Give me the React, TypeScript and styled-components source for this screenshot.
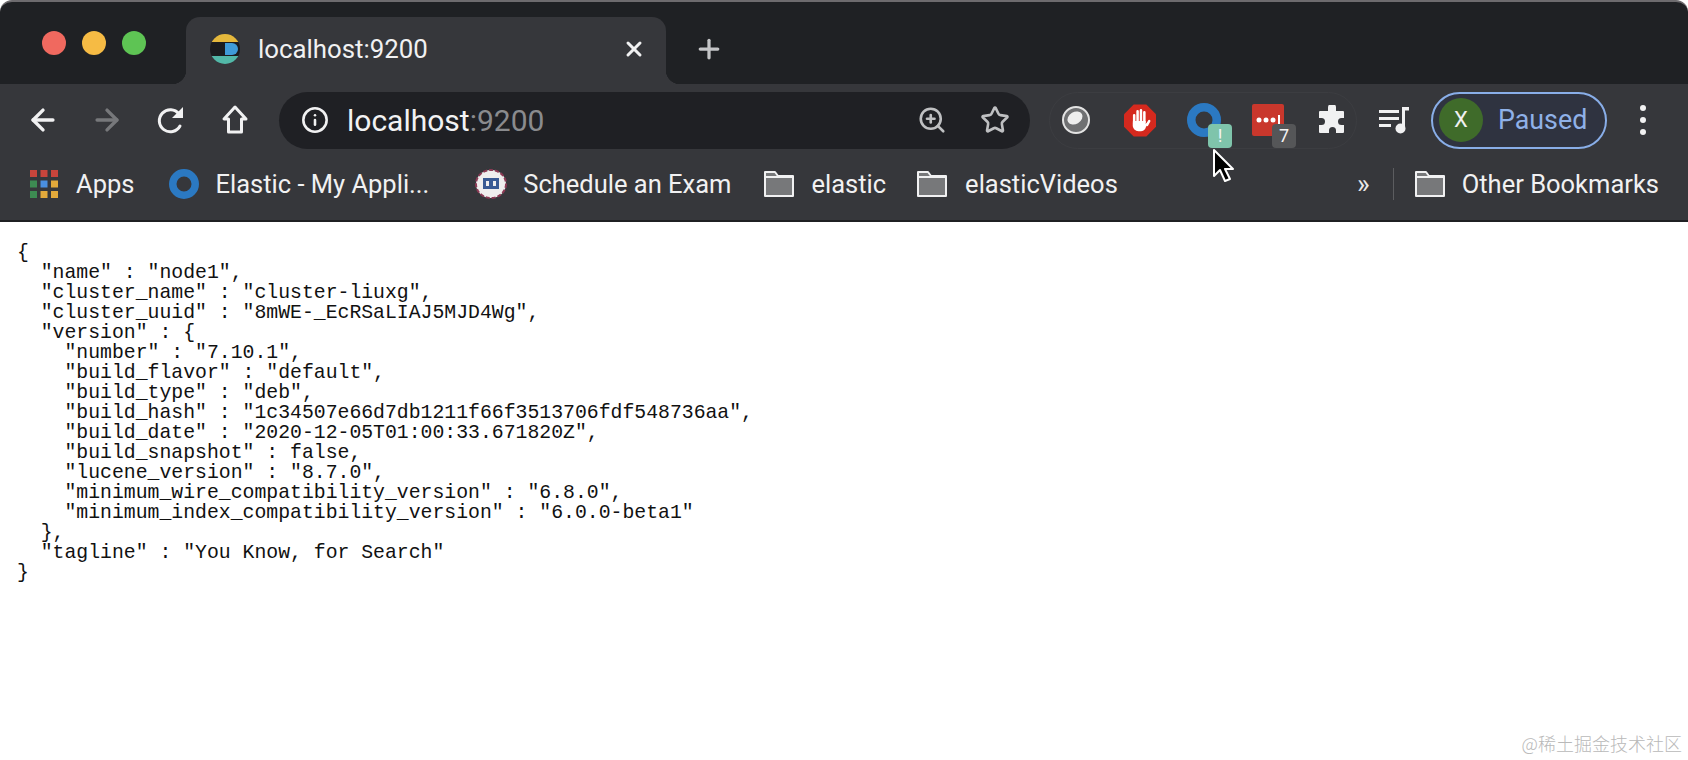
import React from 'react';

import styled, { createGlobalStyle } from 'styled-components';
import { ArrowLeft, ArrowRight, Info, Plus, Star, X, ZoomIn } from 'lucide-react';

const GlobalStyle = createGlobalStyle`
  html, body {
    margin: 0;
    padding: 0;
    background: #ffffff;
    overflow: hidden;
  }
  * {
    box-sizing: border-box;
  }
`;

const UI_FONT = `Roboto, 'Liberation Sans', sans-serif`;

const Window = styled.div`
  position: relative;
  width: 1688px;
  height: 760px;
  display: flex;
  flex-direction: column;
  background: #ffffff;
  font-family: ${UI_FONT};
`;

const TabStrip = styled.div`
  height: 84px;
  display: flex;
  align-items: flex-end;
  padding-left: 42px;
  background: #1f2124;
  border-top: 2px solid #6d6b6e;
  border-top-left-radius: 12px;
  border-top-right-radius: 12px;
`;

const Lights = styled.div`
  display: flex;
  gap: 16px;
  align-self: flex-start;
  margin-top: 29px;
  margin-right: 40px;
`;

const Light = styled.span<{ $color: string }>`
  width: 24px;
  height: 24px;
  border-radius: 50%;
  background: ${p => p.$color};
`;

const Tab = styled.div`
  position: relative;
  width: 480px;
  height: 67px;
  display: flex;
  align-items: center;
  gap: 18px;
  padding: 0 20px 3px 24px;
  background: #36373b;
  border-radius: 14px 14px 0 0;
  color: #f1f1f2;
  font-size: 25.8px;
  &::before,
  &::after {
    content: '';
    position: absolute;
    bottom: 0;
    width: 14px;
    height: 14px;
  }
  &::before {
    left: -14px;
    background: radial-gradient(circle at 0 0, #1f2124 14px, #36373b 14.5px);
  }
  &::after {
    right: -14px;
    background: radial-gradient(circle at 100% 0, #1f2124 14px, #36373b 14.5px);
  }
`;

const TabTitle = styled.span`
  flex: 1;
`;

const NewTab = styled.div`
  width: 30px;
  height: 30px;
  margin: 0 0 20px 28px;
  color: #c4c5c7;
  display: flex;
`;

const Toolbar = styled.div`
  height: 74px;
  display: flex;
  align-items: center;
  padding: 0 0 2px 23px;
  background: #36373b;
`;

const NavButtons = styled.div`
  display: flex;
  gap: 24px;
  margin-right: 24px;
`;

const NavButton = styled.div<{ $dim?: boolean }>`
  width: 40px;
  height: 40px;
  display: flex;
  align-items: center;
  justify-content: center;
  color: ${p => (p.$dim ? '#77787b' : '#f1f1f2')};
`;

const Omnibox = styled.div`
  width: 751px;
  height: 57px;
  display: flex;
  align-items: center;
  padding: 0 20px 0 22px;
  background: #1f2024;
  border-radius: 29px;
  margin-right: 19px;
  color: #f1f1f2;
`;

const Url = styled.div`
  flex: 1;
  margin-left: 18px;
  font-size: 30px;
  color: #f2f2f3;
`;

const UrlPort = styled.span`
  color: #8a8b8e;
`;

const OmniActions = styled.div`
  display: flex;
  align-items: center;
  gap: 33px;
  color: #bfc0c2;
`;

const ExtensionPill = styled.div`
  width: 308px;
  height: 57px;
  display: flex;
  align-items: center;
  gap: 32px;
  padding: 0 10px;
  border: 1px solid #3c3d41;
  border-radius: 29px;
  margin-right: 19px;
`;

const ExtensionSlot = styled.div`
  position: relative;
  width: 32px;
  height: 32px;
  flex: none;
  display: flex;
  align-items: center;
  justify-content: center;
`;

const Badge = styled.span<{ $color: string }>`
  position: absolute;
  right: -12px;
  bottom: -12px;
  width: 24px;
  height: 24px;
  border-radius: 4px;
  background: ${p => p.$color};
  color: #f4f4f4;
  font-size: 18px;
  line-height: 24px;
  text-align: center;
`;

const MediaButton = styled.div`
  width: 36px;
  height: 36px;
  margin-right: 19px;
`;

const Profile = styled.div`
  width: 176px;
  height: 57px;
  display: flex;
  align-items: center;
  gap: 15px;
  padding-left: 6px;
  border: 2px solid #89aee8;
  border-radius: 29px;
  background: #2f3340;
  color: #8fb1e8;
  font-size: 26.8px;
  margin-right: 18px;
`;

const Avatar = styled.span`
  width: 44px;
  height: 44px;
  border-radius: 50%;
  background: #3f6b2a;
  color: #f0f0f0;
  font-size: 22px;
  text-align: center;
  line-height: 44px;
`;

const Kebab = styled.div`
  width: 36px;
  display: flex;
  flex-direction: column;
  align-items: center;
  gap: 6px;
  & span {
    width: 6px;
    height: 6px;
    border-radius: 50%;
    background: #f1f1f2;
  }
`;

const BookmarksBar = styled.div`
  height: 64px;
  display: flex;
  align-items: center;
  padding: 0 0 10px 30px;
  background: #36373b;
  border-bottom: 2px solid #1f2023;
  color: #f1f1f2;
  font-size: 25.5px;
`;

const Bookmark = styled.div<{ $gap?: number; $after?: number }>`
  display: flex;
  align-items: center;
  gap: ${p => p.$gap ?? 16}px;
  margin-right: ${p => p.$after ?? 0}px;
  white-space: nowrap;
`;

const Chevrons = styled.span`
  margin-left: auto;
  font-size: 27px;
  color: #e8e8e9;
`;

const BarDivider = styled.span`
  width: 1px;
  height: 32px;
  background: #5c5d60;
  margin: 0 20px 0 23px;
`;

const Page = styled.pre`
  flex: 1;
  margin: 0;
  padding: 21px 0 0 17px;
  background: #ffffff;
  color: #111111;
  font-family: 'Liberation Mono', 'Courier New', monospace;
  font-size: 19.8px;
  line-height: 20px;
`;

const Pointer = styled.svg`
  position: absolute;
  left: 1211px;
  top: 148px;
`;

const Watermark = styled.div`
  position: absolute;
  right: 6px;
  bottom: 6px;
  color: #b9b9b9;
  font-family: 'Noto Sans CJK SC', 'Liberation Sans', sans-serif;
  font-size: 18px;
  font-weight: 300;
  line-height: 22px;
`;

const JSON_BODY = `{
  "name" : "node1",
  "cluster_name" : "cluster-liuxg",
  "cluster_uuid" : "8mWE-_EcRSaLIAJ5MJD4Wg",
  "version" : {
    "number" : "7.10.1",
    "build_flavor" : "default",
    "build_type" : "deb",
    "build_hash" : "1c34507e66d7db1211f66f3513706fdf548736aa",
    "build_date" : "2020-12-05T01:00:33.671820Z",
    "build_snapshot" : false,
    "lucene_version" : "8.7.0",
    "minimum_wire_compatibility_version" : "6.8.0",
    "minimum_index_compatibility_version" : "6.0.0-beta1"
  },
  "tagline" : "You Know, for Search"
}`;

const ElasticFavicon: React.FC = () => (
  <svg width="30" height="32" viewBox="0 0 30 32" style={{ flex: 'none' }}>
    <defs>
      <clipPath id="fav">
        <circle cx="15" cy="16" r="15" />
      </clipPath>
    </defs>
    <g clipPath="url(#fav)">
      <rect width="30" height="9" fill="#e5b83c" />
      <rect y="9" width="30" height="14" fill="#1b1c1f" />
      <rect y="23" width="30" height="9" fill="#52b8a8" />
      <path d="M15 10h7a6 6 0 0 1 0 12h-7z" fill="#3f9bd8" />
    </g>
  </svg>
);

const ReloadIcon: React.FC = () => (
  <svg width="32" height="32" viewBox="0 0 32 32" fill="none">
    <path d="M25 22a11 11 0 1 1-1-12" stroke="#f1f1f2" strokeWidth="3" strokeLinecap="round" />
    <path d="M28 3v11H17z" fill="#f1f1f2" />
  </svg>
);

const HomeIcon: React.FC = () => (
  <svg width="28" height="32" viewBox="0 0 28 32" fill="none" stroke="#f1f1f2" strokeWidth="3">
    <path d="M14 3 3 15h4.5v13h13V15H25z" strokeLinejoin="round" />
  </svg>
);

const LensIcon: React.FC = () => (
  <svg width="28" height="28" viewBox="0 0 28 28">
    <circle cx="14" cy="14" r="13" fill="#6f7072" stroke="#e3e3e3" strokeWidth="2" />
    <ellipse cx="13" cy="12" rx="8" ry="6" fill="#eeeeee" transform="rotate(-30 13 12)" />
  </svg>
);

const StopHandIcon: React.FC = () => (
  <svg width="33" height="33" viewBox="0 0 33 33">
    <path d="M10 0h13l10 10v13L23 33H10L0 23V10z" fill="#d5291e" />
    <g stroke="#ffffff" strokeWidth="2.6" strokeLinecap="round">
      <path d="M10.5 11v9M14 7v10M17.5 6v11M21 8v10" />
      <path d="M23.8 21l2.2-4" />
    </g>
    <path d="M9.2 17h13.2v3l3-3-3.5 8c-1 1.6-2.4 2.5-4.4 2.5h-2.5c-3.4 0-6-2.5-6-6z" fill="#ffffff" />
  </svg>
);

const RingIcon: React.FC<{ size: number }> = ({ size }) => (
  <svg width={size} height={size} viewBox="0 0 32 32" style={{ flex: 'none' }}>
    <circle cx="16" cy="16" r="12" fill="none" stroke="#2b79c2" strokeWidth="8" />
  </svg>
);

const PasswordIcon: React.FC = () => (
  <svg width="32" height="32" viewBox="0 0 32 32">
    <rect width="32" height="32" rx="2" fill="#c9372c" />
    <circle cx="7" cy="16" r="2.5" fill="#ffffff" />
    <circle cx="14" cy="16" r="2.5" fill="#ffffff" />
    <circle cx="21" cy="16" r="2.5" fill="#ffffff" />
    <rect x="26" y="11" width="2" height="10" fill="#ffffff" />
  </svg>
);

const PuzzleIcon: React.FC = () => (
  <svg width="30" height="30" viewBox="0 0 30 30">
    <path
      d="M11 2.5a4 4 0 0 1 8 0.5V6h7a1 1 0 0 1 1 1v6h-2.5a3.5 3.5 0 0 0 0 7H29v0h-2v7a1 1 0 0 1-1 1h-7v-2.5a3.5 3.5 0 0 0-7 0V28H3a1 1 0 0 1-1-1v-7h2.5a3.5 3.5 0 0 0 0-7H2V7a1 1 0 0 1 1-1h8z"
      fill="#f1f1f2"
    />
  </svg>
);

const MediaIcon: React.FC = () => (
  <svg width="36" height="36" viewBox="0 0 36 36" fill="#f1f1f2">
    <rect x="3" y="8" width="20" height="3" />
    <rect x="3" y="15" width="20" height="3" />
    <rect x="3" y="22" width="12" height="3" />
    <rect x="26" y="5" width="3" height="22" />
    <rect x="26" y="5" width="7" height="3.5" />
    <circle cx="24.5" cy="26.5" r="5" />
  </svg>
);

const AppsIcon: React.FC = () => {
  const colors = ['#c9453c', '#c9453c', '#c9453c', '#3d8b52', '#4a8fe0', '#e2a93b', '#3d8b52', '#e2a93b', '#e2a93b'];
  return (
    <svg width="28" height="28" viewBox="0 0 28 28" style={{ flex: 'none' }}>
      {colors.map((c, i) => (
        <rect key={i} x={(i % 3) * 10.5} y={Math.floor(i / 3) * 10.5} width="7" height="7" fill={c} />
      ))}
    </svg>
  );
};

const PsiIcon: React.FC = () => (
  <svg width="32" height="30" viewBox="0 0 32 30" style={{ flex: 'none' }}>
    <ellipse cx="16" cy="15" rx="15" ry="14" fill="#f0eeee" stroke="#8c3a55" strokeWidth="2" strokeDasharray="4 2" />
    <rect x="8" y="9" width="16" height="11" fill="#3a5a94" />
    <rect x="11" y="12" width="3" height="5" fill="#f0eeee" />
    <rect x="18" y="12" width="3" height="5" fill="#f0eeee" />
  </svg>
);

const FolderIcon: React.FC = () => (
  <svg width="32" height="28" viewBox="0 0 32 28" style={{ flex: 'none' }}>
    <path d="M2 2h10l3 4h15v20H2z" fill="#77787a" stroke="#f1f1f2" strokeWidth="2" strokeLinejoin="round" />
    <path d="M2 7h28" stroke="#f1f1f2" strokeWidth="2" />
  </svg>
);

const App: React.FC = () => (
  <Window>
    <GlobalStyle />
    <TabStrip>
      <Lights>
        <Light $color="#f0695f" />
        <Light $color="#f6bb44" />
        <Light $color="#5ec454" />
      </Lights>
      <Tab>
        <ElasticFavicon />
        <TabTitle>localhost:9200</TabTitle>
        <X size={24} strokeWidth={3} color="#f1f1f2" />
      </Tab>
      <NewTab>
        <Plus size={30} strokeWidth={2.6} />
      </NewTab>
    </TabStrip>
    <Toolbar>
      <NavButtons>
        <NavButton><ArrowLeft size={34} strokeWidth={2.4} /></NavButton>
        <NavButton $dim><ArrowRight size={34} strokeWidth={2.4} /></NavButton>
        <NavButton><ReloadIcon /></NavButton>
        <NavButton><HomeIcon /></NavButton>
      </NavButtons>
      <Omnibox>
        <Info size={28} strokeWidth={2.2} />
        <Url>
          localhost<UrlPort>:9200</UrlPort>
        </Url>
        <OmniActions>
          <ZoomIn size={30} strokeWidth={2.1} />
          <Star size={30} strokeWidth={2.1} />
        </OmniActions>
      </Omnibox>
      <ExtensionPill>
        <ExtensionSlot><LensIcon /></ExtensionSlot>
        <ExtensionSlot><StopHandIcon /></ExtensionSlot>
        <ExtensionSlot>
          <RingIcon size={34} />
          <Badge $color="#7fc4ab">!</Badge>
        </ExtensionSlot>
        <ExtensionSlot>
          <PasswordIcon />
          <Badge $color="#555658">7</Badge>
        </ExtensionSlot>
        <ExtensionSlot><PuzzleIcon /></ExtensionSlot>
      </ExtensionPill>
      <MediaButton><MediaIcon /></MediaButton>
      <Profile>
        <Avatar>X</Avatar>
        Paused
      </Profile>
      <Kebab>
        <span />
        <span />
        <span />
      </Kebab>
    </Toolbar>
    <BookmarksBar>
      <Bookmark $after={35} $gap={18}><AppsIcon />Apps</Bookmark>
      <Bookmark $after={46}><RingIcon size={30} />Elastic - My Appli...</Bookmark>
      <Bookmark $after={32}><PsiIcon />Schedule an Exam</Bookmark>
      <Bookmark $after={30} $gap={16}><FolderIcon />elastic</Bookmark>
      <Bookmark $gap={17}><FolderIcon />elasticVideos</Bookmark>
      <Chevrons>»</Chevrons>
      <BarDivider />
      <Bookmark $after={29}><FolderIcon />Other Bookmarks</Bookmark>
    </BookmarksBar>
    <Page>{JSON_BODY}</Page>
    <Pointer width="26" height="38" viewBox="0 0 26 38">
      <path d="M3 2v26l6-6 5 11 5-2-5-10h8z" fill="#000000" stroke="#ffffff" strokeWidth="2" strokeLinejoin="round" />
    </Pointer>
    <Watermark>@稀土掘金技术社区</Watermark>
  </Window>
);

export default App;
